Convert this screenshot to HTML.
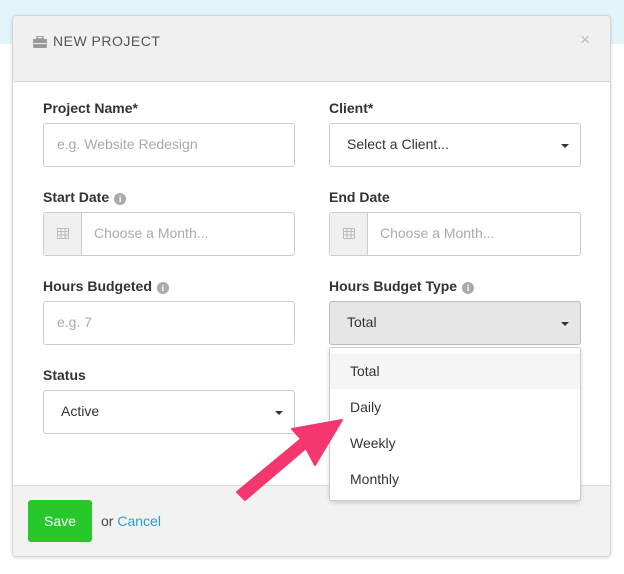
<!DOCTYPE html>
<html><head><style>
*{box-sizing:border-box;margin:0;padding:0}
body{width:624px;height:574px;position:relative;background:#fff;font-family:"Liberation Sans",sans-serif;overflow:hidden}
.top{position:absolute;left:0;top:0;width:624px;height:44px;background:#e3f4fb}
.modal{position:absolute;left:12px;top:15px;width:599px;height:542px;background:#fff;border:1px solid #d6d6d6;border-radius:4px;box-shadow:0 1px 3px rgba(0,0,0,.15);overflow:hidden}
.hd{height:66px;background:#f0f0f0;border-bottom:1px solid #d8d8d8;position:relative}
.hd .t{position:absolute;left:40px;top:17px;font-size:14px;color:#555;letter-spacing:.5px}
.hd .x{position:absolute;right:20px;top:14px;font-size:17px;color:#bbb}
.ft{position:absolute;left:0;top:469px;width:100%;height:73px;background:#f2f2f2;border-top:1px solid #ddd}
.lbl{position:absolute;font-weight:bold;font-size:14px;color:#333}
.inp{position:absolute;width:252px;height:44px;border:1px solid #ccc;border-radius:3px;font-size:14px;color:#aaa;padding:12px 0 0 13px;background:#fff}
.sel{color:#333;padding-left:17px}
.car{position:absolute;right:11px;top:20px;border-left:4px solid transparent;border-right:4px solid transparent;border-top:4px solid #333}
.cal{position:absolute;left:0;top:0;width:38px;height:42px;background:#f0f0f0;border-right:1px solid #ccc}
.i{display:inline-block;width:12px;height:12px;border-radius:50%;background:#aaa;color:#fff;font-size:9px;text-align:center;line-height:12px;vertical-align:0;margin-left:5px;font-family:"Liberation Serif",serif;font-weight:bold}
.dd{position:absolute;left:329px;top:347px;width:252px;height:154px;background:#fff;border:1px solid #ccc;border-radius:3px;box-shadow:0 2px 4px rgba(0,0,0,.15)}
.dd div{position:absolute;left:20px;font-size:14px;color:#333}
</style></head><body>
<div class="top"></div>
<div class="modal">
<div class="hd"><svg style="position:absolute;left:20px;top:20px" width="14" height="12"><rect x="4" y="0" width="6" height="3" fill="none" stroke="#999" stroke-width="1.5"/><rect x="0" y="3" width="14" height="9" rx="1" fill="#999"/><rect x="0" y="7" width="14" height="1" fill="#f0f0f0"/></svg><span class="t">NEW PROJECT</span><span class="x">×</span></div>
<div class="ft"><div style="position:absolute;left:15px;top:14px;width:64px;height:42px;background:#27c82a;border-radius:3px;color:#fff;font-size:14px;text-align:center;line-height:42px">Save</div><span style="position:absolute;left:88px;top:27px;font-size:14px;color:#444">or <span style="color:#2a9fc9">Cancel</span></span></div>
</div>
<div class="lbl" style="left:43px;top:100px">Project Name*</div>
<div class="lbl" style="left:329px;top:100px">Client*</div>
<div class="inp" style="left:43px;top:123px">e.g. Website Redesign</div>
<div class="inp sel" style="left:329px;top:123px">Select a Client...<span class="car"></span></div>
<div class="lbl" style="left:43px;top:189px">Start Date<span class="i">i</span></div>
<div class="lbl" style="left:329px;top:189px">End Date</div>
<div class="inp" style="left:43px;top:212px;padding-left:50px"><span class="cal"><svg style="margin:14px 0 0 13px" width="12" height="12"><rect x=".5" y="1.5" width="11" height="10" fill="none" stroke="#bbb"/><path d="M0 4.5h12M4 2v10M8 2v10M0 8h12" stroke="#bbb"/></svg></span>Choose a Month...</div>
<div class="inp" style="left:329px;top:212px;padding-left:50px"><span class="cal"><svg style="margin:14px 0 0 13px" width="12" height="12"><rect x=".5" y="1.5" width="11" height="10" fill="none" stroke="#bbb"/><path d="M0 4.5h12M4 2v10M8 2v10M0 8h12" stroke="#bbb"/></svg></span>Choose a Month...</div>
<div class="lbl" style="left:43px;top:278px">Hours Budgeted<span class="i">i</span></div>
<div class="lbl" style="left:329px;top:278px">Hours Budget Type<span class="i">i</span></div>
<div class="inp" style="left:43px;top:301px">e.g. 7</div>
<div class="inp sel" style="left:329px;top:301px;background:#e6e6e6;border-color:#bbb">Total<span class="car"></span></div>
<div class="lbl" style="left:43px;top:367px">Status</div>
<div class="inp sel" style="left:43px;top:390px">Active<span class="car"></span></div>
<div class="dd">
<div style="left:0;top:6px;width:250px;height:35px;background:#f5f5f5"></div>
<div style="top:15px">Total</div><div style="top:51px">Daily</div><div style="top:87px">Weekly</div><div style="top:123px">Monthly</div>
</div>
<svg style="position:absolute;left:0;top:0" width="624" height="574"><polygon points="237,492 245,500 306,448 315,465 342,420 292,429 301,439" fill="#f4376f" stroke="#f4376f" stroke-linejoin="round" stroke-width="2"/></svg>
</body></html>
